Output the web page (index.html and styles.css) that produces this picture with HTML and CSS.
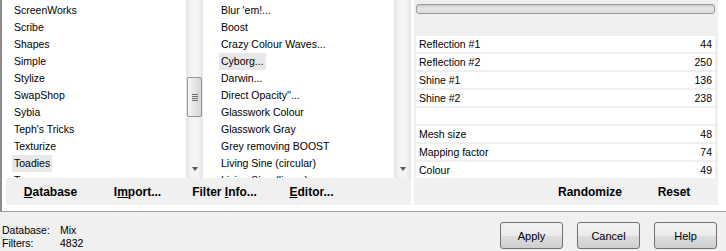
FILE: index.html
```html
<!DOCTYPE html>
<html lang="en">
<head>
  <meta charset="UTF-8">
  <title>Filters Unlimited</title>
  <link rel="stylesheet" href="styles.css">
</head>
<body>

<div class="frame">
  <div class="left">
    <div class="lists">
      <div class="list list-cats">
        <ul class="items">
          <li><span>ScreenWorks</span></li>
          <li><span>Scribe</span></li>
          <li><span>Shapes</span></li>
          <li><span>Simple</span></li>
          <li><span>Stylize</span></li>
          <li><span>SwapShop</span></li>
          <li><span>Sybia</span></li>
          <li><span>Teph's Tricks</span></li>
          <li><span>Texturize</span></li>
          <li class="selected"><span>Toadies</span></li>
          <li><span>Tramages</span></li>
        </ul>
        <div class="scrollbar">
          <div class="thumb"><i></i><i></i><i></i><i></i></div>
          <div class="arrow"></div>
        </div>
      </div>
      <div class="list list-filters">
        <ul class="items">
          <li><span>Blur 'em!...</span></li>
          <li><span>Boost</span></li>
          <li><span>Crazy Colour Waves...</span></li>
          <li class="selected"><span>Cyborg...</span></li>
          <li><span>Darwin...</span></li>
          <li><span>Direct Opacity''...</span></li>
          <li><span>Glasswork Colour</span></li>
          <li><span>Glasswork Gray</span></li>
          <li><span>Grey removing BOOST</span></li>
          <li><span>Living Sine (circular)</span></li>
          <li><span>Living Sine (linear)</span></li>
        </ul>
        <div class="scrollbar">
          <div class="arrow"></div>
        </div>
      </div>
    </div>
    <div class="toolbar">
      <button class="tool"><u>D</u>atabase</button>
      <button class="tool">I<u>m</u>port...</button>
      <button class="tool">Filter <u>I</u>nfo...</button>
      <button class="tool"><u>E</u>ditor...</button>
    </div>
  </div>

  <div class="right">
    <div class="progress"></div>
    <div class="params">
      <div class="param"><span>Reflection #1</span><span>44</span></div>
      <div class="param"><span>Reflection #2</span><span>250</span></div>
      <div class="param"><span>Shine #1</span><span>136</span></div>
      <div class="param"><span>Shine #2</span><span>238</span></div>
      <div class="param"></div>
      <div class="param"><span>Mesh size</span><span>48</span></div>
      <div class="param"><span>Mapping factor</span><span>74</span></div>
      <div class="param"><span>Colour</span><span>49</span></div>
    </div>
    <div class="toolbar toolbar-right">
      <button class="tool tool-narrow">Randomize</button>
      <button class="tool tool-narrow">Reset</button>
    </div>
  </div>
</div>

<div class="footer">
  <div class="status">
    <div class="stat"><span class="stat-label">Database:</span><span>Mix</span></div>
    <div class="stat"><span class="stat-label">Filters:</span><span>4832</span></div>
  </div>
  <div class="actions">
    <button class="btn">Apply</button>
    <button class="btn">Cancel</button>
    <button class="btn">Help</button>
  </div>
</div>

</body>
</html>
```

FILE: styles.css
```css
body {
  margin: 0;
  padding: 0;
  background-color: #f0f0f0;
  font-family: "Liberation Sans", Arial, sans-serif;
  font-size: 10.5px;
  color: #000;
  overflow: hidden;
}
.frame {
  display: flex;
  gap: 3px;
  width: 716px;
  height: 205px;
  padding: 0 4px 6px 4px;
  background-color: #fff;
  border-left: 2px solid #8c8c8c;
  border-right: 1px solid #b4b4b4;
  border-bottom: 1px solid #a0a0a0;
}
.left {
  width: 405px;
  display: flex;
  flex-direction: column;
}
.lists {
  display: flex;
  gap: 4px;
  height: 178px;
}
.list {
  display: flex;
  height: 178px;
  overflow: hidden;
}
.list-cats {
  width: 197px;
}
.list-filters {
  width: 204px;
}
.items {
  flex: 1;
  list-style: none;
  margin: 0;
  padding: 2px 0 0 0;
  overflow: hidden;
}
.items li {
  height: 17px;
  line-height: 17px;
  padding-left: 6px;
  white-space: nowrap;
}
.list-filters .items li {
  padding-left: 12px;
}
.items span {
  padding: 0 2px;
  display: inline-block;
}
.items .selected span {
  background-color: #e8e8e8;
}
.scrollbar {
  width: 17px;
  display: flex;
  flex-direction: column;
  align-items: center;
  background: linear-gradient(to right, #e4e4e4, #f4f4f4 30%, #f4f4f4 70%, #e4e4e4);
}
.thumb {
  box-sizing: border-box;
  width: 15px;
  height: 40px;
  margin-top: 77px;
  border: 1px solid #979797;
  border-radius: 2px;
  background: linear-gradient(to right, #f4f4f4, #e6e6e6 50%, #d4d4d4);
  display: flex;
  flex-direction: column;
  align-items: center;
  justify-content: center;
  gap: 1px;
}
.thumb i {
  width: 6px;
  height: 1px;
  background-color: #6f6f6f;
}
.arrow {
  margin-top: auto;
  margin-bottom: 7px;
  width: 0;
  height: 0;
  border-left: 3.5px solid transparent;
  border-right: 3.5px solid transparent;
  border-top: 4px solid #5a5a5a;
}
.toolbar {
  display: flex;
  height: 27px;
  padding-left: 1px;
  background-color: #f0f0f0;
}
.tool {
  width: 87px;
  height: 27px;
  padding: 0;
  border: none;
  background: none;
  font-family: "Liberation Sans", Arial, sans-serif;
  font-size: 12px;
  font-weight: bold;
  color: #000;
  cursor: pointer;
}
.toolbar-right {
  justify-content: flex-end;
  padding: 0 2px 0 0;
}
.tool-narrow {
  width: 84px;
}
.right {
  width: 304px;
  display: flex;
  flex-direction: column;
  background-color: #efefef;
}
.progress {
  box-sizing: border-box;
  height: 10px;
  margin: 4px 3px 0 2px;
  border: 1px solid #9a9a9a;
  border-radius: 3px;
  background: linear-gradient(to bottom, #c8c8c8, #e6e6e6 40%, #dadada);
}
.params {
  display: flex;
  flex-direction: column;
  gap: 2px;
  margin: 22px 3px 0 2px;
  height: 142px;
}
.param {
  display: flex;
  justify-content: space-between;
  height: 16px;
  line-height: 16px;
  padding: 0 3px;
  background-color: #fff;
}
.footer {
  display: flex;
  justify-content: space-between;
  align-items: flex-start;
  padding: 10px 9px 0 2px;
}
.status {
  padding-top: 2px;
}
.stat {
  display: flex;
  height: 13px;
  line-height: 13px;
}
.stat-label {
  width: 58px;
}
.actions {
  display: flex;
  gap: 14px;
}
.btn {
  width: 63px;
  height: 27px;
  padding: 0;
  border: 1px solid #707070;
  border-radius: 3px;
  background: linear-gradient(to bottom, #f2f2f2, #ebebeb 50%, #dddddd 51%, #cfcfcf);
  font-family: "Liberation Sans", Arial, sans-serif;
  font-size: 11px;
  color: #000;
  cursor: pointer;
}
```
